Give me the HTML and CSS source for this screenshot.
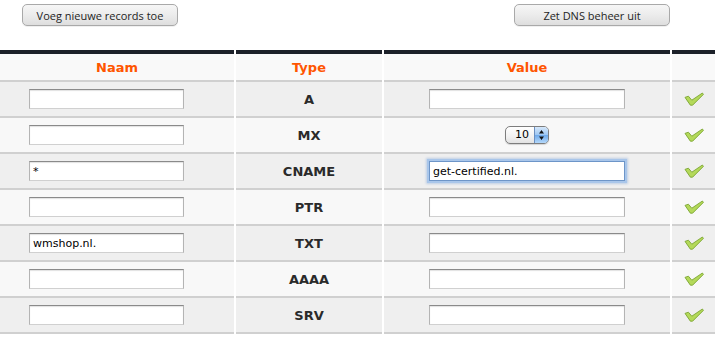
FILE: index.html
```html
<!DOCTYPE html>
<html>
<head>
<meta charset="utf-8">
<link rel="stylesheet" href="styles.css">
</head>
<body>
<div class="toolbar">
  <button class="btn">Voeg nieuwe records toe</button>
  <button class="btn">Zet DNS beheer uit</button>
</div>
<div class="records">
  <div class="row head">
    <div class="cell">Naam</div>
    <div class="cell">Type</div>
    <div class="cell">Value</div>
    <div class="cell"></div>
  </div>

  <div class="row odd">
    <div class="cell name"><input class="field name-field" type="text" value=""></div>
    <div class="cell type">A</div>
    <div class="cell value"><input class="field value-field" type="text" value=""></div>
    <div class="cell ok"><svg class="check" viewBox="0 0 20 14" width="20" height="14"><path d="M1 5.4 L4.4 4.2 L7.8 8.2 L18.4 1 L19.4 2.4 L8.6 13.2 L6.4 13.2 Z"/></svg></div>
  </div>

  <div class="row even">
    <div class="cell name"><input class="field name-field" type="text" value=""></div>
    <div class="cell type">MX</div>
    <div class="cell value">
      <div class="stepper"><span class="num">10</span><span class="arrows"><svg viewBox="0 0 7 12" width="7" height="12"><path d="M3.5 1 L6 4.6 L1 4.6 Z M3.5 11 L6 7.4 L1 7.4 Z"/></svg></span></div>
    </div>
    <div class="cell ok"><svg class="check" viewBox="0 0 20 14" width="20" height="14"><path d="M1 5.4 L4.4 4.2 L7.8 8.2 L18.4 1 L19.4 2.4 L8.6 13.2 L6.4 13.2 Z"/></svg></div>
  </div>

  <div class="row odd">
    <div class="cell name"><input class="field name-field" type="text" value="*"></div>
    <div class="cell type">CNAME</div>
    <div class="cell value"><input class="field value-field focus" type="text" value="get-certified.nl."></div>
    <div class="cell ok"><svg class="check" viewBox="0 0 20 14" width="20" height="14"><path d="M1 5.4 L4.4 4.2 L7.8 8.2 L18.4 1 L19.4 2.4 L8.6 13.2 L6.4 13.2 Z"/></svg></div>
  </div>

  <div class="row even">
    <div class="cell name"><input class="field name-field" type="text" value=""></div>
    <div class="cell type">PTR</div>
    <div class="cell value"><input class="field value-field" type="text" value=""></div>
    <div class="cell ok"><svg class="check" viewBox="0 0 20 14" width="20" height="14"><path d="M1 5.4 L4.4 4.2 L7.8 8.2 L18.4 1 L19.4 2.4 L8.6 13.2 L6.4 13.2 Z"/></svg></div>
  </div>

  <div class="row odd">
    <div class="cell name"><input class="field name-field" type="text" value="wmshop.nl."></div>
    <div class="cell type">TXT</div>
    <div class="cell value"><input class="field value-field" type="text" value=""></div>
    <div class="cell ok"><svg class="check" viewBox="0 0 20 14" width="20" height="14"><path d="M1 5.4 L4.4 4.2 L7.8 8.2 L18.4 1 L19.4 2.4 L8.6 13.2 L6.4 13.2 Z"/></svg></div>
  </div>

  <div class="row even">
    <div class="cell name"><input class="field name-field" type="text" value=""></div>
    <div class="cell type">AAAA</div>
    <div class="cell value"><input class="field value-field" type="text" value=""></div>
    <div class="cell ok"><svg class="check" viewBox="0 0 20 14" width="20" height="14"><path d="M1 5.4 L4.4 4.2 L7.8 8.2 L18.4 1 L19.4 2.4 L8.6 13.2 L6.4 13.2 Z"/></svg></div>
  </div>

  <div class="row odd">
    <div class="cell name"><input class="field name-field" type="text" value=""></div>
    <div class="cell type">SRV</div>
    <div class="cell value"><input class="field value-field" type="text" value=""></div>
    <div class="cell ok"><svg class="check" viewBox="0 0 20 14" width="20" height="14"><path d="M1 5.4 L4.4 4.2 L7.8 8.2 L18.4 1 L19.4 2.4 L8.6 13.2 L6.4 13.2 Z"/></svg></div>
  </div>
</div>
</body>
</html>
```

FILE: styles.css
```css
html, body {
  margin: 0;
  padding: 0;
  background: #ffffff;
}
body {
  font-family: "DejaVu Sans", Verdana, sans-serif;
  color: #333;
  width: 715px;
  overflow: hidden;
}
.toolbar {
  height: 50px;
  box-sizing: border-box;
  padding: 4px 45px 0 22px;
  display: flex;
  justify-content: space-between;
  align-items: flex-start;
}
.btn {
  width: 156px;
  height: 22px;
  margin: 0;
  padding: 0;
  border: 1px solid #a9a9a9;
  border-radius: 5px;
  background: linear-gradient(#f6f6f6 0%, #ececec 50%, #dedede 100%);
  font-family: "Open Sans", sans-serif;
  font-size: 11px;
  color: #1e1e1e;
  box-shadow: 0 1px 0 rgba(0,0,0,0.06);
}
.records {
  display: flex;
  flex-direction: column;
}
.row {
  display: grid;
  grid-template-columns: 234px 146px 286px 43px;
  column-gap: 2px;
}
.cell {
  height: 34px;
  border-bottom: 2px solid #d0d0d0;
  display: flex;
  align-items: center;
  justify-content: center;
}
.odd .cell { background: #efefef; }
.even .cell { background: #f8f8f8; }
.head .cell {
  height: 26px;
  border-top: 4px solid #1c2129;
  background: #f9f9f9;
  color: #ff5500;
  font-weight: bold;
  font-size: 13px;
}
.cell.name {
  justify-content: flex-start;
  padding-left: 29px;
}
.cell.type {
  font-weight: bold;
  font-size: 13px;
  color: #2a2a2a;
}
.field {
  box-sizing: border-box;
  height: 20px;
  margin: 0;
  padding: 1px 3px 0;
  border: 1px solid #b4b4b4;
  border-top-color: #8a8a8a;
  border-bottom-color: #d0d0d0;
  background: #fff;
  box-shadow: inset 0 1px 1px rgba(0,0,0,0.12);
  font-family: "DejaVu Sans", sans-serif;
  font-size: 11px;
  color: #000;
  outline: none;
}
.name-field { width: 155px; }
.value-field { width: 196px; }
.field.focus {
  border: 1px solid #6d95c8;
  box-shadow: 0 0 0 2px #a9c6ea, 0 0 2px 3px rgba(120,160,215,0.4);
}
.stepper {
  display: flex;
  width: 44px;
  height: 18px;
  box-sizing: border-box;
  border: 1px solid #7d7d7d;
  border-radius: 5px;
  overflow: hidden;
  background: linear-gradient(#ffffff, #f1f1f1 60%, #e2e2e2);
  box-shadow: 0 1px 1px rgba(0,0,0,0.15);
}
.stepper .num {
  flex: 1;
  font-family: "DejaVu Sans", sans-serif;
  font-size: 11px;
  color: #000;
  line-height: 16px;
  text-align: right;
  padding-right: 5px;
}
.stepper .arrows {
  width: 13px;
  display: flex;
  align-items: center;
  justify-content: center;
  border-left: 1px solid #6a8fc0;
  background: linear-gradient(#d6e8fb, #9cc6f2 50%, #6ea9ea 51%, #b4d8fa);
}
.stepper .arrows path { fill: #111; }
.cell.ok .check path {
  fill: #b4d95a;
  stroke: #7ba532;
  stroke-width: 0.9;
  stroke-linejoin: round;
}
```
